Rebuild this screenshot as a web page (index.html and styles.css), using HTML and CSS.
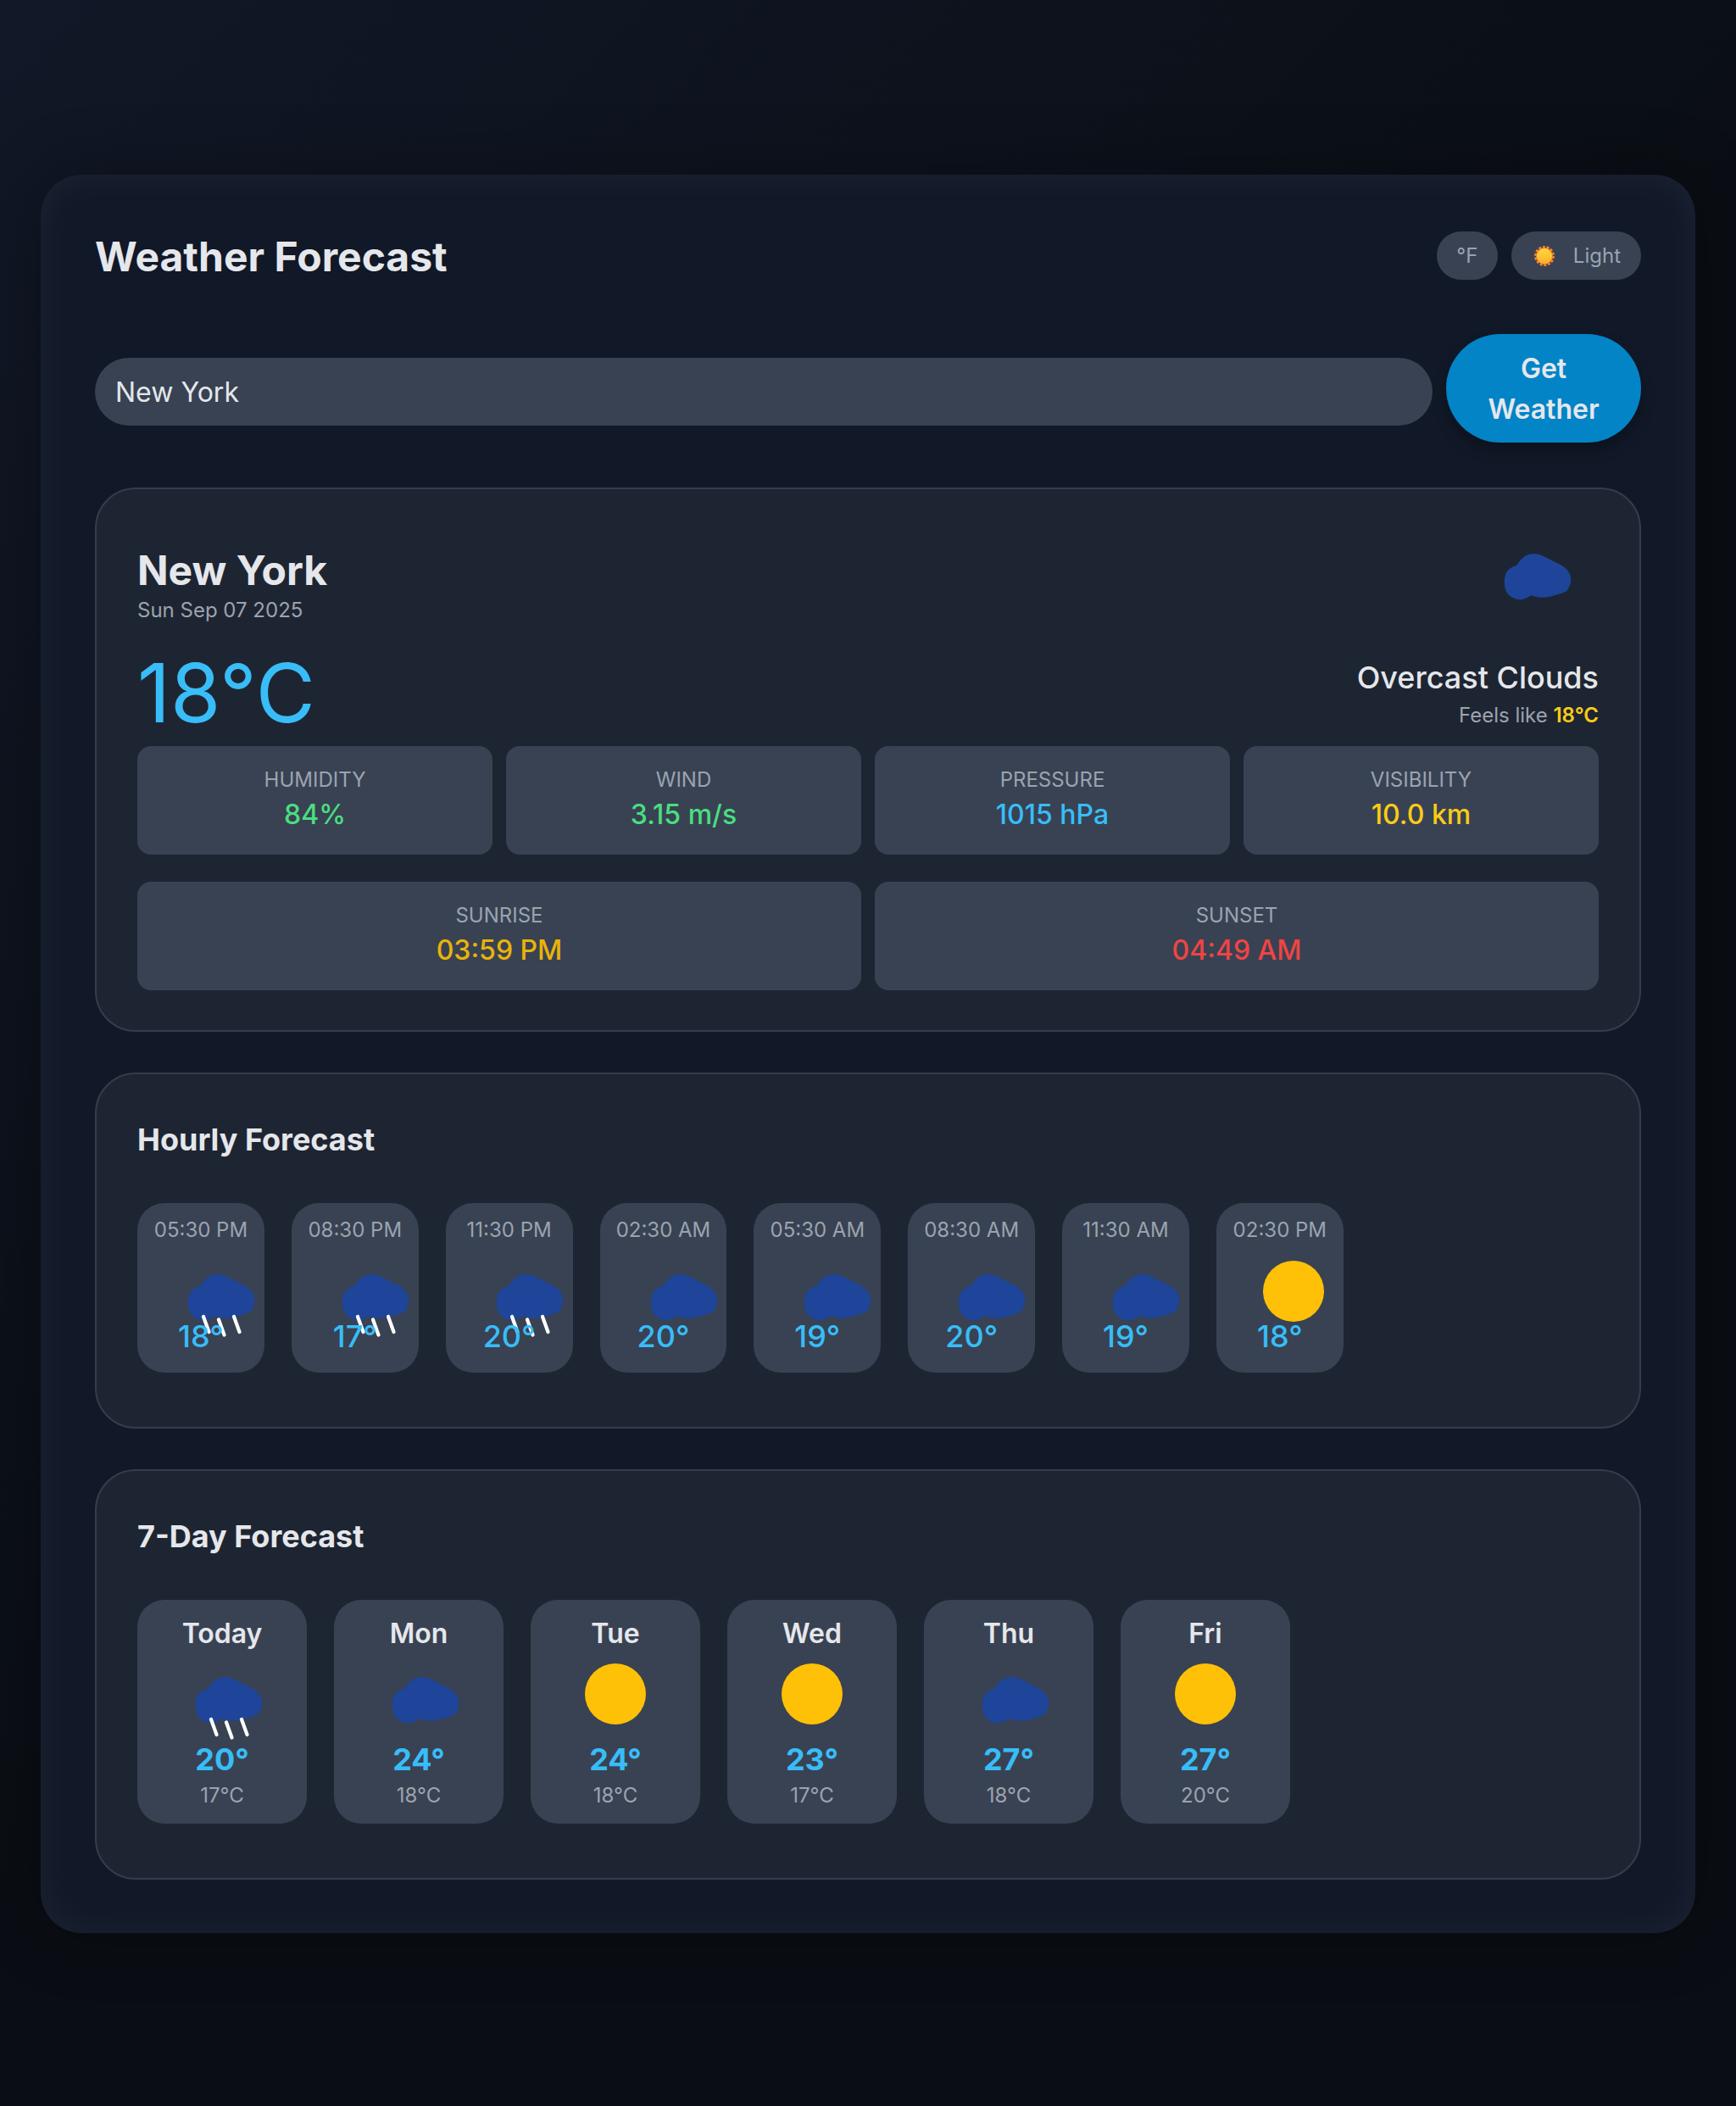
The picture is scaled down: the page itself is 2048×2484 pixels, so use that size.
FILE: index.html
```html
<!DOCTYPE html>
<html lang="en">
<head>
  <meta charset="UTF-8">
  <title>Weather Forecast</title>
  <link rel="stylesheet" href="styles.css">
</head>
<body>

  <svg class="defs" width="0" height="0">
    <symbol id="cloud" viewBox="0 0 72 72" overflow="visible">
      <path fill="#1e4599" d="M19.3 29.7C25 20.3 31.7 16 40 16C46.7 16 53.3 20.3 63.3 25.3C75 30.3 83.3 37 83.3 46C83.3 52 80.7 57 78.3 60.3C66.7 65.3 56.7 67.7 48.3 67.7C43.3 67.7 39.3 66.3 36 65.3C31.7 68.7 26.7 70.3 22.7 70.3C15 70.3 6.7 63.7 5.7 57C4.3 50.3 4.3 45.3 6.7 38.7C9.3 33.7 15 31 19.3 29.7Z"/>
    </symbol>
    <symbol id="rain" viewBox="0 0 72 72" overflow="visible">
      <path fill="#1e4599" d="M19.3 29.7C25 20.3 31.7 16 40 16C46.7 16 53.3 20.3 63.3 25.3C75 30.3 83.3 37 83.3 46C83.3 52 80.7 57 78.3 60.3C66.7 65.3 56.7 67.7 48.3 67.7C43.3 67.7 39.3 66.3 36 65.3C31.7 68.7 26.7 70.3 22.7 70.3C15 70.3 6.7 63.7 5.7 57C4.3 50.3 4.3 45.3 6.7 38.7C9.3 33.7 15 31 19.3 29.7Z"/>
      <path fill="none" stroke="#fff" stroke-width="4.2" stroke-linecap="round" d="M23 66L29.5 84M41 69.5L47.5 87.5M59 66L65.5 84"/>
    </symbol>
  </svg>

  <div class="app">

    <header class="top">
      <h1>Weather Forecast</h1>
      <div class="toggles">
        <button class="pill pill-unit">°F</button>
        <button class="pill pill-theme">
          <svg class="theme-sun" viewBox="0 0 24 24">
            <defs>
              <linearGradient id="sunfill" x1="0" y1="0" x2="0" y2="1">
                <stop offset="0" stop-color="#ffd93d"/>
                <stop offset="1" stop-color="#f8b02a"/>
              </linearGradient>
            </defs>
            <circle cx="12" cy="12" r="10.7" fill="none" stroke="#f9822b" stroke-width="2.6" stroke-dasharray="3 1.8"/>
            <circle cx="12" cy="12" r="10" fill="#f9822b"/>
            <circle cx="12" cy="12" r="9" fill="url(#sunfill)"/>
          </svg>
          <span>Light</span>
        </button>
      </div>
    </header>

    <div class="search">
      <input class="search-input" type="text" value="New York">
      <button class="search-btn">Get Weather</button>
    </div>

    <section class="panel now">
      <div class="now-head">
        <div class="now-place">
          <h2 class="city">New York</h2>
          <div class="date">Sun Sep 07 2025</div>
        </div>
        <svg class="icon now-icon"><use href="#cloud"/></svg>
      </div>
      <div class="now-main">
        <div class="temp-big">18°C</div>
        <div class="desc">
          <div class="desc-text">Overcast Clouds</div>
          <div class="feels">Feels like <span class="yellow">18°C</span></div>
        </div>
      </div>
      <div class="stats">
        <div class="stat"><div class="stat-label">Humidity</div><div class="stat-value green">84%</div></div>
        <div class="stat"><div class="stat-label">Wind</div><div class="stat-value green">3.15 m/s</div></div>
        <div class="stat"><div class="stat-label">Pressure</div><div class="stat-value blue">1015 hPa</div></div>
        <div class="stat"><div class="stat-label">Visibility</div><div class="stat-value yellow">10.0 km</div></div>
      </div>
      <div class="stats stats-sun">
        <div class="stat"><div class="stat-label">Sunrise</div><div class="stat-value amber">03:59 PM</div></div>
        <div class="stat"><div class="stat-label">Sunset</div><div class="stat-value red">04:49 AM</div></div>
      </div>
    </section>

    <section class="panel">
      <h3 class="panel-title">Hourly Forecast</h3>
      <div class="row">
        <div class="hour"><div class="hour-time">05:30 PM</div><svg class="icon"><use href="#rain"/></svg><div class="hour-temp">18°</div></div>
        <div class="hour"><div class="hour-time">08:30 PM</div><svg class="icon"><use href="#rain"/></svg><div class="hour-temp">17°</div></div>
        <div class="hour"><div class="hour-time">11:30 PM</div><svg class="icon"><use href="#rain"/></svg><div class="hour-temp">20°</div></div>
        <div class="hour"><div class="hour-time">02:30 AM</div><svg class="icon"><use href="#cloud"/></svg><div class="hour-temp">20°</div></div>
        <div class="hour"><div class="hour-time">05:30 AM</div><svg class="icon"><use href="#cloud"/></svg><div class="hour-temp">19°</div></div>
        <div class="hour"><div class="hour-time">08:30 AM</div><svg class="icon"><use href="#cloud"/></svg><div class="hour-temp">20°</div></div>
        <div class="hour"><div class="hour-time">11:30 AM</div><svg class="icon"><use href="#cloud"/></svg><div class="hour-temp">19°</div></div>
        <div class="hour"><div class="hour-time">02:30 PM</div><div class="icon sun"></div><div class="hour-temp">18°</div></div>
      </div>
    </section>

    <section class="panel">
      <h3 class="panel-title">7-Day Forecast</h3>
      <div class="row">
        <div class="day"><div class="day-name">Today</div><svg class="icon"><use href="#rain"/></svg><div class="day-temp">20°</div><div class="day-low">17°C</div></div>
        <div class="day"><div class="day-name">Mon</div><svg class="icon"><use href="#cloud"/></svg><div class="day-temp">24°</div><div class="day-low">18°C</div></div>
        <div class="day"><div class="day-name">Tue</div><div class="icon sun"></div><div class="day-temp">24°</div><div class="day-low">18°C</div></div>
        <div class="day"><div class="day-name">Wed</div><div class="icon sun"></div><div class="day-temp">23°</div><div class="day-low">17°C</div></div>
        <div class="day"><div class="day-name">Thu</div><svg class="icon"><use href="#cloud"/></svg><div class="day-temp">27°</div><div class="day-low">18°C</div></div>
        <div class="day"><div class="day-name">Fri</div><div class="icon sun"></div><div class="day-temp">27°</div><div class="day-low">20°C</div></div>
      </div>
    </section>

  </div>

</body>
</html>
```

FILE: styles.css
```css
* {
  box-sizing: border-box;
}
html, body {
  margin: 0;
  height: 100%;
}
body {
  font-family: Inter, "Liberation Sans", sans-serif;
  background: linear-gradient(135deg, #111827 0%, #0a0e14 50%, #0a0e14 100%);
  color: #e5e7eb;
  padding: 206px 48px 0;
}
.defs {
  position: absolute;
}
.app {
  background: #111827;
  border-radius: 48px;
  padding: 64px;
  height: 2074px;
  box-shadow: 0 0 80px rgba(0, 0, 0, 0.3), inset 0 0 48px rgba(255, 255, 255, 0.05);
}
.top {
  display: flex;
  justify-content: space-between;
  align-items: center;
  height: 60px;
  margin-bottom: 64px;
}
h1 {
  margin: 6px 0 0;
  font-size: 48px;
  line-height: 60px;
  font-weight: 700;
}
.toggles {
  display: flex;
  gap: 16px;
  margin-top: 3px;
}
.pill {
  height: 57px;
  padding: 0 24px;
  border: 0;
  border-radius: 32px;
  background: #384253;
  color: #9ca3af;
  font: 24px Inter, sans-serif;
}
.pill-unit {
  width: 72px;
  padding: 0;
}
.pill-theme {
  display: flex;
  align-items: center;
  gap: 22px;
  padding-left: 27px;
}
.theme-sun {
  width: 24px;
  height: 24px;
}
.search {
  display: flex;
  align-items: center;
  gap: 16px;
  margin-bottom: 53px;
}
.search-input {
  flex: 1;
  height: 80px;
  margin-top: 8px;
  padding: 0 24px;
  border: 0;
  border-radius: 40px;
  background: #384253;
  color: #e5e7eb;
  font: 32px Inter, sans-serif;
}
.search-btn {
  width: 230px;
  height: 128px;
  padding: 17px 32px 15px;
  border: 0;
  border-radius: 64px;
  background: #0284c7;
  color: #e5e7eb;
  font: 600 32px/48px Inter, sans-serif;
  box-shadow: 0 10px 16px rgba(0, 0, 0, 0.25);
}
.panel {
  background: #1e2532;
  border: 2px solid #353d4c;
  border-radius: 48px;
  padding: 50px 48px 48px;
  margin-bottom: 48px;
}
.now {
  height: 642px;
}
.now-head {
  display: flex;
  justify-content: space-between;
  height: 121px;
}
.now-place {
  padding-top: 16px;
}
.city {
  margin: 0 0 1px;
  font-size: 48px;
  line-height: 60px;
  font-weight: 700;
}
.date {
  font-size: 24px;
  line-height: 32px;
  color: #9ca3af;
}
.icon {
  display: block;
  width: 72px;
  height: 72px;
  overflow: visible;
}
.now-icon {
  margin: 10px 44px 0 0;
}
.now-main {
  display: flex;
  justify-content: space-between;
  align-items: flex-end;
  height: 114px;
  margin-bottom: 18px;
}
.temp-big {
  font-size: 96px;
  line-height: 90px;
  font-weight: 400;
  color: #38bdf8;
}
.desc {
  text-align: right;
}
.desc-text {
  font-size: 36px;
  line-height: 54px;
  font-weight: 500;
}
.feels {
  font-size: 24px;
  line-height: 36px;
  color: #9ca3af;
}
.feels .yellow {
  font-weight: 600;
}
.stats {
  display: grid;
  grid-template-columns: repeat(4, 1fr);
  gap: 16px;
}
.stats-sun {
  grid-template-columns: repeat(2, 1fr);
  margin-top: 32px;
}
.stat {
  height: 128px;
  padding-top: 22px;
  border-radius: 16px;
  background: #384253;
  text-align: center;
}
.stat-label {
  font-size: 24px;
  line-height: 35px;
  color: #9ca3af;
  text-transform: uppercase;
}
.stat-value {
  font-size: 32px;
  line-height: 48px;
  font-weight: 500;
}
.green { color: #4ade80; }
.blue { color: #38bdf8; }
.yellow { color: #facc15; }
.amber { color: #eab308; }
.red { color: #ef4444; }
.panel-title {
  margin: 0 0 48px;
  font-size: 36px;
  line-height: 54px;
  font-weight: 700;
}
.row {
  display: flex;
  gap: 32px;
  padding-bottom: 16px;
}
.hour {
  width: 149.85px;
  height: 200px;
  padding-top: 16px;
  border-radius: 32px;
  background: #384253;
}
.hour-time {
  font-size: 24px;
  line-height: 32px;
  color: #9ca3af;
  text-align: center;
}
.hour .icon {
  margin: 20px 0 0 55px;
}
.hour-temp {
  margin-top: -10px;
  font-size: 36px;
  line-height: 54px;
  font-weight: 500;
  color: #38bdf8;
  text-align: center;
}
.day {
  width: 200px;
  height: 264px;
  padding-top: 16px;
  border-radius: 32px;
  background: #384253;
  text-align: center;
}
.day-name {
  font-size: 32px;
  line-height: 48px;
  font-weight: 600;
}
.day .icon {
  margin: 11px auto 0;
}
.day-temp {
  margin-top: 14px;
  font-size: 36px;
  line-height: 54px;
  font-weight: 700;
  color: #38bdf8;
}
.day-low {
  font-size: 24px;
  line-height: 32px;
  color: #9ca3af;
}
.sun {
  border-radius: 50%;
  background: #ffc107;
}
```
